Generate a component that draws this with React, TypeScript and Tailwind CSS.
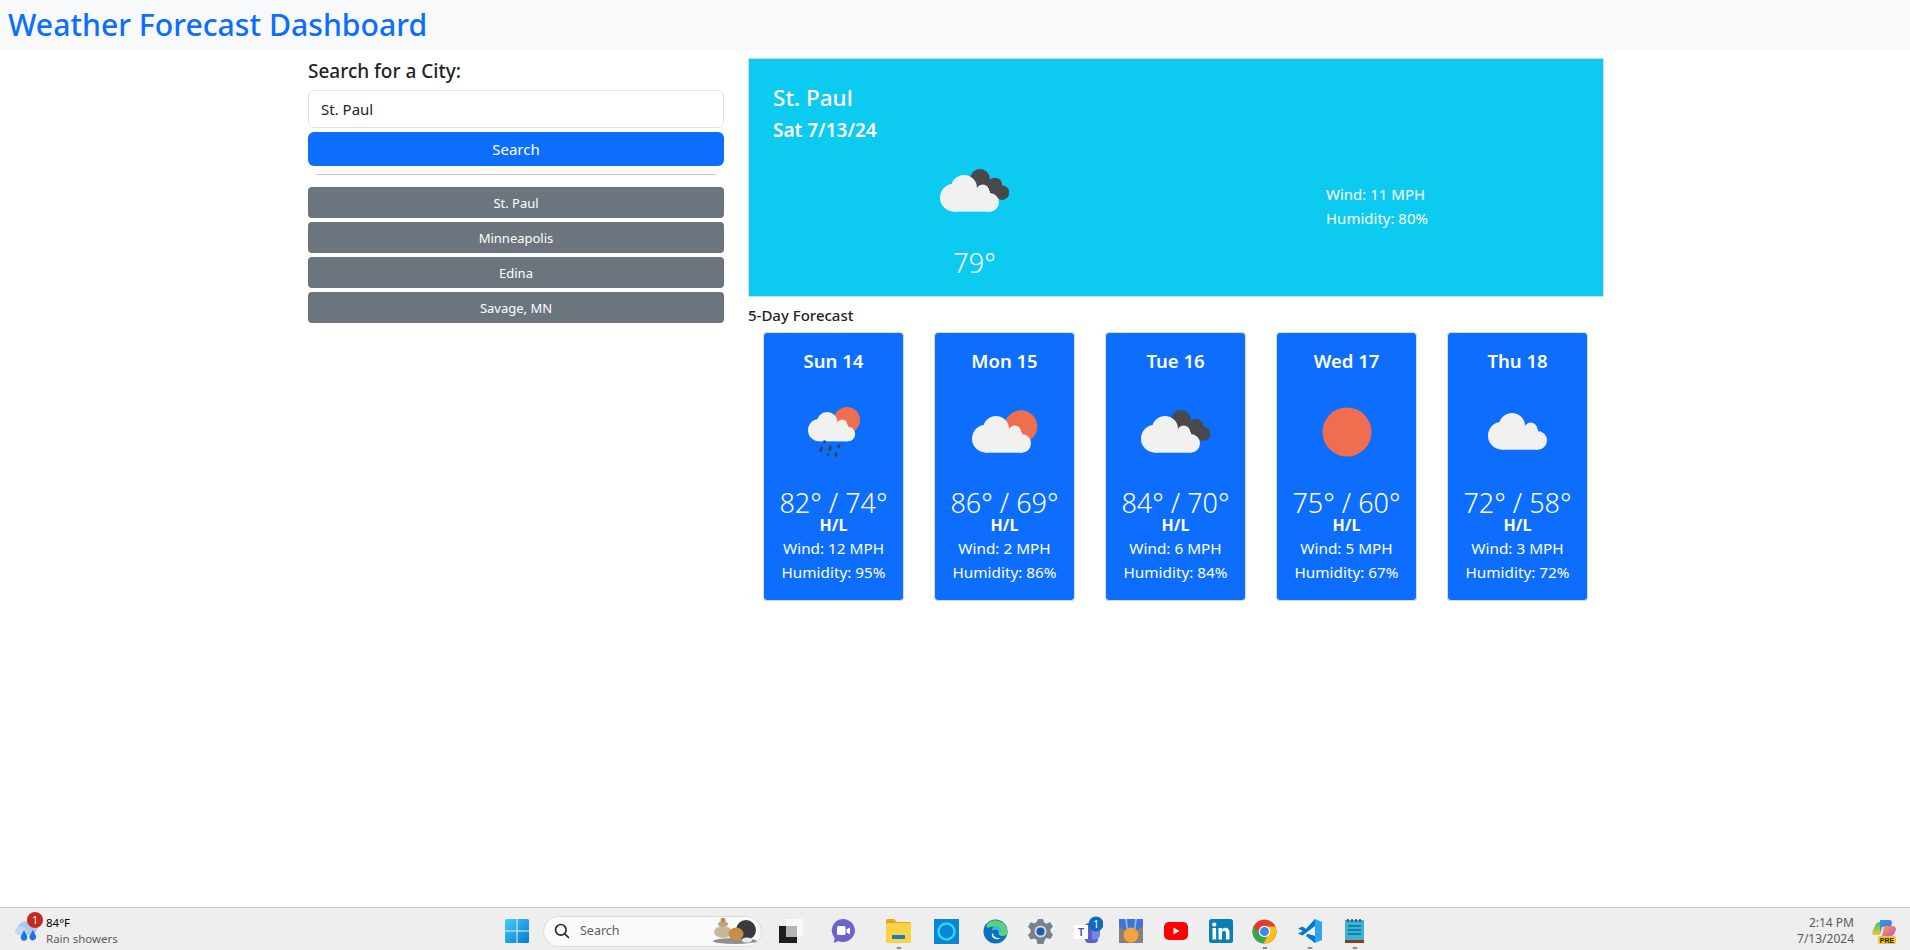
const cities = ["St. Paul", "Minneapolis", "Edina", "Savage, MN"];

type Kind = "rain" | "sun-cloud" | "clouds" | "sun" | "cloud";

const forecast: { day: string; temp: string; wind: string; humidity: string; icon: Kind }[] = [
  { day: "Sun 14", temp: "82° / 74°", wind: "12", humidity: "95", icon: "rain" },
  { day: "Mon 15", temp: "86° / 69°", wind: "2", humidity: "86", icon: "sun-cloud" },
  { day: "Tue 16", temp: "84° / 70°", wind: "6", humidity: "84", icon: "clouds" },
  { day: "Wed 17", temp: "75° / 60°", wind: "5", humidity: "67", icon: "sun" },
  { day: "Thu 18", temp: "72° / 58°", wind: "3", humidity: "72", icon: "cloud" },
];

const CloudShape = ({ x = 0, y = 0, s = 1 }: { x?: number; y?: number; s?: number }) => (
  <g transform={`translate(${x} ${y}) scale(${s})`} fill="#f1f1f0">
    <circle cx="14" cy="22.7" r="14" />
    <circle cx="24" cy="13" r="13" />
    <circle cx="42.7" cy="16" r="6.5" />
    <circle cx="49.7" cy="27.4" r="9.3" />
    <rect x="14" y="16" width="36" height="20.7" />
  </g>
);

const WeatherIcon = ({ kind }: { kind: Kind }) => {
  if (kind === "sun") {
    return (
      <svg width="50" height="50" viewBox="0 0 50 50">
        <circle cx="25" cy="25" r="24.5" fill="#ee6e4f" />
      </svg>
    );
  }
  if (kind === "cloud") {
    return (
      <svg width="60" height="37" viewBox="0 0 60 37">
        <CloudShape />
      </svg>
    );
  }
  if (kind === "sun-cloud") {
    return (
      <svg width="66" height="43" viewBox="0 0 66 43">
        <circle cx="49" cy="16.5" r="16.3" fill="#ee6e4f" />
        <CloudShape y={6} />
      </svg>
    );
  }
  if (kind === "clouds") {
    return (
      <svg width="69" height="43" viewBox="0 0 69 43">
        <g fill="#49484b">
          <circle cx="40" cy="10" r="10" />
          <circle cx="55" cy="16" r="7.3" />
          <circle cx="62" cy="23.7" r="7.3" />
          <rect x="36" y="12" width="24" height="16" />
        </g>
        <CloudShape y={6} />
      </svg>
    );
  }
  return (
    <svg width="52" height="50" viewBox="0 0 52 50">
      <circle cx="39" cy="13" r="13" fill="#ee6e4f" />
      <CloudShape y={5} s={0.8} />
      <g stroke="#3f4046" strokeWidth="2.6" strokeLinecap="round">
        <path d="M16.5 34.5v.5" />
        <path d="M13.5 41l-1 2.6" />
        <path d="M22.5 40l-1 3" />
        <path d="M31 38.5l-.6 1.2" />
        <path d="M20 47.5v.2" />
        <path d="M28.5 46.5l-.8 2" />
      </g>
    </svg>
  );
};

const WinLogo = () => (
  <svg width="24" height="24" viewBox="0 0 24 24">
    <defs>
      <linearGradient id="win" x1="0" y1="0" x2="1" y2="1">
        <stop offset="0" stopColor="#3fd0fb" />
        <stop offset="1" stopColor="#0478d0" />
      </linearGradient>
    </defs>
    <path fill="url(#win)" d="M0 1.5A1.5 1.5 0 0 1 1.5 0h10v11.5H0zM12.5 0h10A1.5 1.5 0 0 1 24 1.5v10H12.5zM0 12.5h11.5V24h-10A1.5 1.5 0 0 1 0 22.5zM12.5 12.5H24v10a1.5 1.5 0 0 1-1.5 1.5h-10z" />
  </svg>
);

const Stones = () => (
  <svg width="46" height="28" viewBox="0 0 46 28">
    <ellipse cx="24" cy="24" rx="22" ry="3" fill="#8f8f8c" />
    <circle cx="35" cy="13" r="10" fill="#3a3a3a" />
    <ellipse cx="12" cy="15" rx="9" ry="6" fill="#c4b998" />
    <ellipse cx="12" cy="7" rx="5" ry="3" fill="#b9a77c" />
    <ellipse cx="12" cy="3" rx="2.5" ry="2.2" fill="#c08a4c" />
    <ellipse cx="25" cy="17" rx="7.5" ry="6.5" fill="#c98d48" />
    <ellipse cx="36" cy="23" rx="5" ry="2.6" fill="#e8e8e8" />
  </svg>
);

const TaskView = () => (
  <svg width="24" height="24" viewBox="0 0 24 24">
    <rect x="7" y="0" width="17" height="17" fill="#fafafa" />
    <rect x="0" y="7" width="18" height="17" fill="#1d1d1d" />
    <rect x="7" y="7" width="11" height="11" fill="#b5b5b5" />
  </svg>
);

const Meet = () => (
  <svg width="24" height="24" viewBox="0 0 24 24">
    <path fill="#6d63cf" d="M12 0a12 11.5 0 1 1-5 22l-4 2 .6-5A11.5 11.5 0 0 1 12 0z" />
    <rect x="6" y="7" width="8.5" height="9" rx="1.5" fill="#fff" />
    <path fill="#fff" d="M15.5 10.5l3.5-2v7l-3.5-2z" />
  </svg>
);

const Folder = () => (
  <svg width="25" height="24" viewBox="0 0 25 24">
    <path fill="#e3a81b" d="M0 2a2 2 0 0 1 2-2h6l3 3h12a2 2 0 0 1 2 2v4H0z" />
    <rect x="0" y="4" width="25" height="20" rx="1.5" fill="#fbd243" />
    <rect x="6" y="16" width="13" height="4" rx="1" fill="#1779c9" />
  </svg>
);

const Alexa = () => (
  <svg width="25" height="25" viewBox="0 0 25 25">
    <rect width="25" height="25" fill="#0a84d6" />
    <circle cx="12.5" cy="12.5" r="8" fill="none" stroke="#2fd8f5" strokeWidth="2.4" />
  </svg>
);

const Edge = () => (
  <svg width="25" height="25" viewBox="0 0 25 25">
    <circle cx="12.5" cy="12.5" r="12" fill="#0c6fc0" />
    <path fill="#5fd07a" d="M4 5a12 12 0 0 1 20.5 8c0 3-3 4.5-6 4-2-.4-3-1.500-2.800-3 .3-4-4-7-8-6-2 .5-3.500 1-3.700 1-.2-1.500-.3-3 0-4z" />
    <path fill="#2dbce6" d="M13 7c3 0 5.500 2.500 5 6-2-2-6-3-9-1.500C9 9 10.500 7 13 7z" />
    <path fill="#ecf3f8" d="M10 14c0 3.500 4 6 8 5-3 2-6.500 1.500-8.500-1-1-1.500-.7-3 .5-4z" />
  </svg>
);

const Gear = () => (
  <svg width="25" height="25" viewBox="0 0 25 25">
    <path fill="#77828c" d="M10 0h5l1 3.600 2.600 1.100L22 3l3 4.500-2.500 2.800.1 2.600L25 15.500 22.500 20l-3.700-1-2 1.700L15.500 25h-6l-1-4.200-2.200-1.300-3.600 1L0 16l2.500-2.800v-2.600L0 8l2.500-4.700 3.800 1.100 2.400-1.300z" />
    <circle cx="12.500" cy="12.500" r="6" fill="#d6dade" />
    <circle cx="12.500" cy="12.500" r="4" fill="#1d5fa8" />
  </svg>
);

const Teams = () => (
  <svg width="29" height="30" viewBox="0 0 29 30">
    <rect x="11" y="7" width="13" height="20" rx="4" fill="#5a63c4" />
    <path fill="#7b83eb" d="M18 8h8v12a6 6 0 0 1-8 3z" />
    <rect x="0" y="9" width="14" height="14" fill="#fff" />
    <text x="7" y="20" textAnchor="middle" fontSize="10" fontWeight="700" fill="#4b53bc" fontFamily="Liberation Sans, sans-serif">T</text>
    <circle cx="22" cy="8" r="7.500" fill="#0f6cbd" />
    <text x="22" y="11.500" textAnchor="middle" fontSize="10" fill="#fff" fontFamily="Noto Sans, sans-serif">1</text>
  </svg>
);

const Medal = () => (
  <svg width="24" height="24" viewBox="0 0 24 24">
    <rect width="24" height="24" fill="#87817a" />
    <path fill="#3d74d8" d="M0 0h24v7L16 13H8L0 7z" />
    <path fill="#93b5ee" d="M6 0h2l1 10H7.500zM16 0h2l-1.500 10H15z" />
    <circle cx="12" cy="16" r="7.500" fill="#f3a33c" />
  </svg>
);

const Youtube = () => (
  <svg width="24" height="18" viewBox="0 0 24 18">
    <rect width="24" height="18" rx="5" fill="#f00" />
    <path fill="#fff" d="M9.500 5.500l6 3.500-6 3.500z" />
  </svg>
);

const Linkedin = () => (
  <svg width="24" height="24" viewBox="0 0 24 24">
    <rect width="24" height="24" rx="2.500" fill="#0a7fb5" />
    <rect x="3.500" y="9" width="3.600" height="11.500" fill="#fff" />
    <circle cx="5.300" cy="5.600" r="2.100" fill="#fff" />
    <path fill="#fff" d="M9.500 9h3.400v1.600c.7-1.100 1.900-1.900 3.500-1.900 3 0 4.100 2 4.100 5v6.800h-3.600v-6c0-1.500-.4-2.700-1.900-2.700s-2 1.200-2 2.700v6H9.500z" />
  </svg>
);

const Chrome = () => (
  <svg width="25" height="25" viewBox="0 0 25 25">
    <circle cx="12.500" cy="12.500" r="12" fill="#e33b2e" />
    <path fill="#2da94f" d="M1.700 7.300A12 12 0 0 0 11 24.400l5-8.500h-8z" />
    <path fill="#fbc116" d="M23.300 7.500H12.500l4 7.500-5 9.400A12 12 0 0 0 23.300 7.500z" />
    <circle cx="12.500" cy="12.500" r="5.800" fill="#fff" />
    <circle cx="12.500" cy="12.500" r="4.500" fill="#3f85f4" />
  </svg>
);

const VsCode = () => (
  <svg width="24" height="24" viewBox="0 0 24 24">
    <path fill="#2aa7ee" d="M17 0l7 3v18l-7 3-9-9.500L17 17V7L8 10z" />
    <path fill="#0a78c8" d="M17 0v7L4.500 16.500 0 14.500 5 12 0 9.500l4.500-2 3.500 2.500zM17 17v7l-9-7 1.500-2z" />
  </svg>
);

const Notepad = () => (
  <svg width="19" height="24" viewBox="0 0 19 24">
    <rect x="0" y="1" width="19" height="20" fill="#3db2d9" />
    <rect x="0" y="21" width="19" height="3" fill="#8d3f12" />
    <path stroke="#33414d" strokeWidth="1.500" d="M3 0v3M7 0v3M11 0v3M15 0v3" />
    <path stroke="#0f6f95" strokeWidth="1.500" d="M3 7h13M3 11h13M3 15h13" />
  </svg>
);

const Copilot = () => (
  <svg width="25" height="26" viewBox="0 0 25 26">
    <defs>
      <linearGradient id="cpa" x1="0" y1="0" x2="1" y2="1">
        <stop offset="0" stopColor="#2a9fe8" />
        <stop offset="1" stopColor="#6b5fe0" />
      </linearGradient>
      <linearGradient id="cpb" x1="0" y1="0" x2="1" y2="1">
        <stop offset="0" stopColor="#f6a33c" />
        <stop offset="1" stopColor="#c74fd8" />
      </linearGradient>
      <linearGradient id="cpc" x1="0" y1="0" x2="0" y2="1">
        <stop offset="0" stopColor="#3fbf6a" />
        <stop offset="1" stopColor="#f0c63a" />
      </linearGradient>
    </defs>
    <path fill="url(#cpc)" d="M3 8c1-3 3-4 5-4h3L8 17H2C0 17 0 14 1 12z" />
    <path fill="url(#cpa)" d="M8 2h9c2 0 3 1 3 3l-1 4h-9l-2 6z" />
    <path fill="url(#cpb)" d="M12 8h9c2 0 3 2 3 4l-2 4c-1 2-3 2-5 2h-7z" />
    <rect x="6" y="18" width="18" height="8" rx="2" fill="#f5c518" />
    <text x="15" y="24.500" textAnchor="middle" fontSize="7" fontWeight="700" fill="#222" fontFamily="Liberation Sans, sans-serif">PRE</text>
  </svg>
);

const RainCloud = () => (
  <svg width="25" height="24" viewBox="0 0 25 24">
    <ellipse cx="12.500" cy="9" rx="10" ry="7" fill="#a9c9ee" />
    <ellipse cx="6" cy="12" rx="6" ry="4.500" fill="#bfd8f3" />
    <path fill="#1b74e0" d="M9 11l3 6a3.300 3.300 0 1 1-6 0zM18 11l3 6a3.400 3.400 0 1 1-6.500 0z" />
  </svg>
);

const Dot = () => <span className="absolute -bottom-[3px] left-1/2 h-[2px] w-[5px] -translate-x-1/2 rounded-full bg-[#8c8c8c]"></span>;

const taskIcons = [
  { icon: <TaskView />, gap: "ml-[17px]" },
  { icon: <Meet />, gap: "ml-7" },
  { icon: <Folder />, gap: "ml-[31px]", dot: true },
  { icon: <Alexa />, gap: "ml-[23px]" },
  { icon: <Edge />, gap: "ml-6" },
  { icon: <Gear />, gap: "ml-5" },
  { icon: <Teams />, gap: "ml-[21px]" },
  { icon: <Medal />, gap: "ml-4" },
  { icon: <Youtube />, gap: "ml-[21px]" },
  { icon: <Linkedin />, gap: "ml-[21px]" },
  { icon: <Chrome />, gap: "ml-[19px]", dot: true },
  { icon: <VsCode />, gap: "ml-[21px]", dot: true },
  { icon: <Notepad />, gap: "ml-[23px]", dot: true },
];

const App = () => {
  return (
    <div className="flex h-screen flex-col overflow-hidden bg-white font-['Noto_Sans',sans-serif] text-[#212529]">
      <div className="flex h-[50px] shrink-0 items-center bg-[#f8f9fa] pl-2">
        <h1 className="text-[30.200px] font-medium leading-[50px] text-[#0d6efd]">Weather Forecast Dashboard</h1>
      </div>

      <div className="mx-auto flex w-[1320px] flex-1 pt-2">
        <div className="w-[440px] shrink-0 pl-[13px] pr-[11px]">
          <h2 className="text-[19px] font-medium leading-[26px]">Search for a City:</h2>
          <input
            readOnly
            value="St. Paul"
            className="mt-[6px] block h-[38px] w-full rounded-md border border-[#dee2e6] bg-white px-3 text-[15px] text-[#212529]"
          />
          <button className="mt-1 block h-[34px] w-full rounded-md bg-[#0d6efd] text-[15px] text-white">Search</button>
          <hr className="mx-2 mt-2 border-t border-[#c6c7c8]" />
          <div className="mt-3 flex flex-col gap-1">
            {cities.map((city) => (
              <button key={city} className="h-[31px] w-full rounded bg-[#6c757d] pt-[2px] text-[13px] text-white">
                {city}
              </button>
            ))}
          </div>
        </div>

        <div className="w-[880px] pl-[13px] pr-[11px]">
          <div className="flex h-[239px] border border-[#d8d8d8] bg-[#0dcaf0] text-white">
            <div className="flex w-1/2 flex-col pl-6 pt-[23px]">
              <div className="text-[22.500px] font-medium leading-[32px]">St. Paul</div>
              <div className="mt-[3px] text-[19px] font-semibold leading-[26px]">Sat 7/13/24</div>
              <div className="mt-[26px] flex justify-center">
                <WeatherIcon kind="clouds" />
              </div>
              <div className="mt-[32px] text-center text-[27px] font-light leading-[38px]">79°</div>
            </div>
            <div className="flex w-1/2 flex-col justify-center pl-[150px] pt-[57px] text-[15px] leading-[24px]">
              <div>Wind: 11 MPH</div>
              <div>Humidity: 80%</div>
            </div>
          </div>

          <h3 className="mt-[6px] text-[15px] font-medium leading-[24px]">5-Day Forecast</h3>

          <div className="mt-[5px] flex gap-[30px] pl-[15px]">
            {forecast.map((f) => (
              <div key={f.day} className="h-[269px] w-[141px] rounded-sm border border-[#d8dadc] bg-[#0d6efd] pt-4 text-center text-white">
                <div className="text-[18.500px] font-semibold leading-[24px]">{f.day}</div>
                <div className="flex h-[117px] items-center justify-center">
                  <WeatherIcon kind={f.icon} />
                </div>
                <div className="pt-[2px] text-[27px] font-light leading-[22px]">{f.temp}</div>
                <div className="text-[16px] font-bold leading-[22px]">H/L</div>
                <div className="text-[15.300px] leading-[24px]">Wind: {f.wind} MPH</div>
                <div className="text-[15.300px] leading-[24px]">Humidity: {f.humidity}%</div>
              </div>
            ))}
          </div>
        </div>
      </div>

      <div className="flex h-[43px] shrink-0 items-center border-t border-[#c8c8c8] bg-[#eeeeee] pt-1">
        <div className="flex w-[505px] shrink-0 items-center pl-[15px]">
          <div className="relative mr-[6px]">
            <RainCloud />
            <span className="absolute -right-[3px] -top-[7px] flex h-4 w-4 items-center justify-center rounded-full bg-[#c42b1c] text-[10px] text-white">1</span>
          </div>
          <div className="text-[11.500px] leading-[16px]">
            <div className="text-black">84°F</div>
            <div className="text-[#5c5c5c]">Rain showers</div>
          </div>
        </div>
        <WinLogo />
        <div className="ml-[14px] flex h-[31px] w-[219px] shrink-0 items-center rounded-full border border-[#dcdcdc] bg-[#fafafa] pl-[10px] pr-1">
          <svg width="16" height="16" viewBox="0 0 16 16" fill="none" stroke="#2b2b2b" strokeWidth="1.700">
            <circle cx="6.800" cy="6.800" r="5.300" />
            <path d="M10.800 10.800L15 15" />
          </svg>
          <span className="ml-[10px] flex-1 text-[12.500px] text-[#5f5f5f]">Search</span>
          <Stones />
        </div>
        <div className="flex items-center">
          {taskIcons.map((t, i) => (
            <div key={i} className={`relative flex h-[30px] items-center justify-center ${t.gap}`}>
              {t.icon}
              {t.dot && <Dot />}
            </div>
          ))}
        </div>
        <div className="ml-auto mr-[18px] text-right text-[12px] leading-[16px] text-[#5a5a5a]">
          <div>2:14 PM</div>
          <div>7/13/2024</div>
        </div>
        <div className="mr-[13px]">
          <Copilot />
        </div>
      </div>
    </div>
  );
};

export default App;
